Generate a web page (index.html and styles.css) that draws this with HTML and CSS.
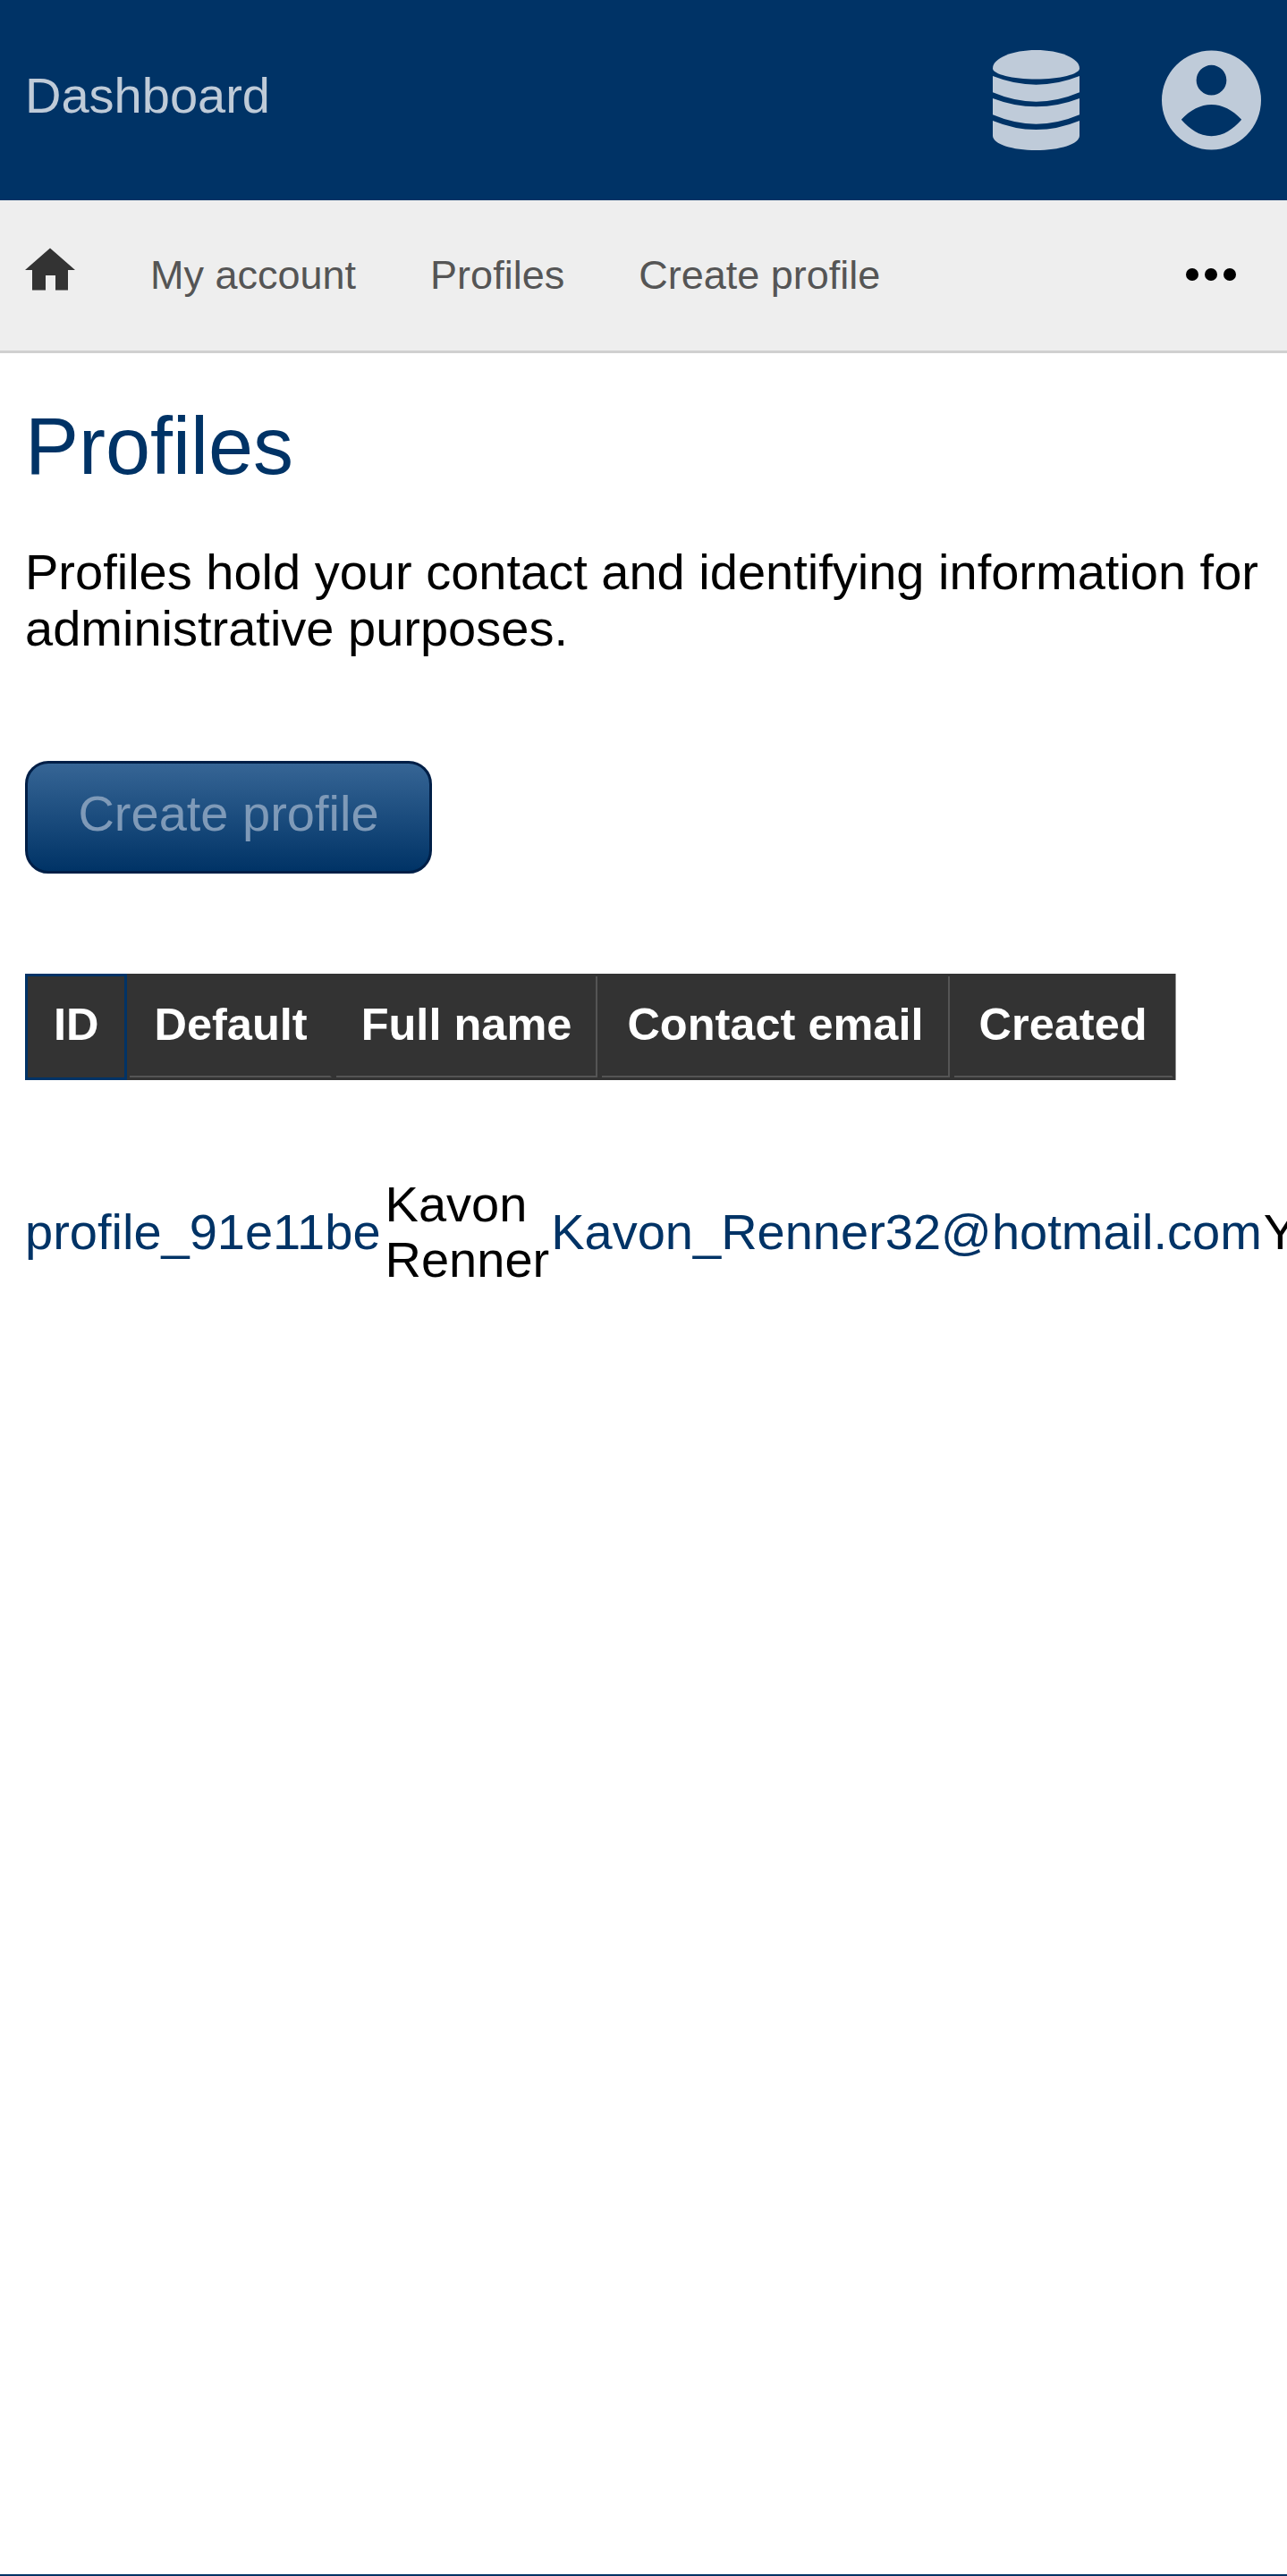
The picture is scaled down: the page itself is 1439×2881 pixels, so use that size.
FILE: index.html
```html
<!DOCTYPE html>
<html lang="en">
<head>
<meta charset="utf-8">
<title>Profiles</title>
<link rel="stylesheet" href="styles.css">
</head>
<body>
<div class="page">
  <header class="topbar">
    <a class="brand" href="#">Dashboard</a>
    <div class="top-icons">
      <svg class="icon-db" viewBox="0 0 97 112" aria-hidden="true"><path d="M0 20.5C0 9 22 0 48.5 0S97 9 97 20.5C97 27 75 32.5 48.5 32.5S0 27 0 20.5z"/><path d="M0 29Q48.5 48.4 97 29V47.3Q48.5 68 0 47.3z"/><path d="M0 54Q48.5 72.6 97 54V72.3Q48.5 93 0 72.3z"/><path d="M0 79Q48.5 99 97 79V95.7C97 105 75 112 48.5 112S0 105 0 95.7z"/></svg>
      <svg class="icon-user" viewBox="0 0 112 112" aria-hidden="true"><path fill-rule="evenodd" d="M56 0a56 56 0 1 0 0 112A56 56 0 0 0 56 0zM56 16.500a17 17 0 1 1 0 34a17 17 0 0 1 0-34zM22 78C32 67 44 61 56 61S80 67 90 78C80 89 70 96.500 56 96.500S32 89 22 78z"/></svg>
    </div>
  </header>
  <nav class="subnav">
    <a class="home" href="#" aria-label="Home"><svg viewBox="0 0 56 48" aria-hidden="true"><path d="M28 0.500L56 25H48V47.500H34V31H23V47.500H8V25H0z"/></svg></a>
    <a class="nav-link" href="#">My account</a>
    <a class="nav-link" href="#">Profiles</a>
    <a class="nav-link" href="#">Create profile</a>
    <span class="more" aria-hidden="true"><i></i><i></i><i></i></span>
  </nav>
  <main class="content">
    <h1>Profiles</h1>
    <p class="intro">Profiles hold your contact and identifying information for administrative purposes.</p>
    <a class="btn" href="#">Create profile</a>
    <table class="head-table">
      <thead>
        <tr>
          <th class="active"><div class="cell">ID</div></th>
          <th><div class="cell no-sep tight">Default</div></th>
          <th><div class="cell">Full name</div></th>
          <th><div class="cell">Contact email</div></th>
          <th><div class="cell no-sep">Created</div></th>
        </tr>
      </thead>
    </table>
    <div class="body-wrap">
      <table class="body-table">
        <tbody>
          <tr>
            <td class="id-col"><a href="#">profile_91e11be</a></td>
            <td>Kavon Renner</td>
            <td><a href="#">Kavon_Renner32@hotmail.com</a></td>
            <td>Yes</td>
          </tr>
        </tbody>
      </table>
    </div>
  </main>
  <footer class="bottom-line"></footer>
</div>
</body>
</html>
```

FILE: styles.css
```css
* { box-sizing: border-box; }
html, body { margin: 0; padding: 0; background: #fff; }
body { font-family: "Liberation Sans", Arial, sans-serif; color: #000; overflow-x: hidden; }
a { text-decoration: none; color: #003366; }

.page { min-height: 2881px; display: flex; flex-direction: column; }

.topbar { height: 224px; background: #003366; display: flex; align-items: center; justify-content: space-between; padding: 0 29px 0 28px; }
.brand { color: #bfcbd8; font-size: 56px; line-height: 63px; margin-top: -12px; }
.top-icons { display: flex; align-items: center; gap: 92px; }
.top-icons svg { fill: #bfcbd9; display: block; }
.icon-db { width: 97px; height: 112px; }
.icon-user { width: 111px; height: 112px; }

.subnav { height: 171px; background: #eeeeee; border-bottom: 3px solid #d0d0d0; display: flex; align-items: center; padding: 0 29px 0 28px; }
.home { display: block; width: 56px; height: 48px; margin-right: 84px; margin-bottom: 14px; }
.home svg { display: block; width: 56px; height: 48px; fill: #333; }
.nav-link { color: #555; font-size: 45px; line-height: 52px; margin-right: 83px; }
.more { margin-left: auto; display: flex; gap: 7px; margin-right: 28px; margin-bottom: 3px; }
.more i { display: block; width: 14px; height: 14px; border-radius: 50%; background: #000; }

.content { flex: 1; padding: 0 0 0 28px; overflow: hidden; }
h1 { margin: 53px 0 0; font-weight: normal; font-size: 90px; line-height: 102px; color: #003366; }
.intro { margin: 58px 0 0; font-size: 56px; line-height: 63px; max-width: 1400px; }
.btn { display: inline-block; margin-top: 117px; width: 455px; height: 126px; line-height: 112px; text-align: center; font-size: 56px; color: #7f9ab8; border: 3px solid #001f47; border-radius: 26px; background: linear-gradient(#366595, #003366); }

.head-table { margin-top: 112px; border-collapse: separate; border-spacing: 0; background: #333; border-right: 1px solid #8f8f8f; }
.head-table th { color: #fff; font-size: 50.5px; line-height: 58px; font-weight: bold; text-align: left; padding: 3px 2px 3px 3px; vertical-align: top; }
.cell { padding: 25px 27px 28px 28px; border-right: 2px solid #555; border-bottom: 2px solid #555; }
.cell.no-sep { border-right-color: #333; }
.cell.tight { padding-right: 25px; }
.head-table th.active { padding: 0; border: 3px solid #003366; }
.active .cell { padding: 25px 28px 30px 29px; border: 0; }

.body-wrap { margin-top: 108px; }
.body-table { border-collapse: separate; border-spacing: 2px 0; margin-left: -2px; width: 100%; font-size: 56px; line-height: 62px; }
.body-table td { padding: 0; }
.body-table .id-col { padding-right: 3px; }

.bottom-line { height: 2px; background: #003366; }
```
